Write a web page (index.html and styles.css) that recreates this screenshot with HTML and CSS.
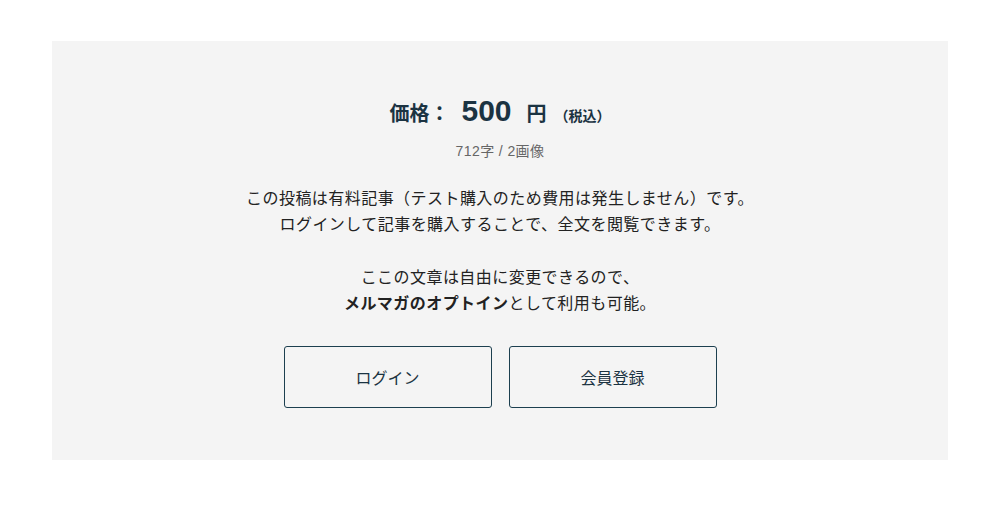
FILE: index.html
```html
<!DOCTYPE html>
<html lang="ja">
<head>
  <meta charset="UTF-8">
  <meta name="viewport" content="width=device-width, initial-scale=1.0">
  <title>有料記事</title>
  <link rel="stylesheet" href="styles.css">
</head>
<body>
  <div class="paywall">
    <div class="price">
      <span class="price-label">価格：</span>
      <span class="price-value">500</span>
      <span class="price-unit">円</span>
      <span class="price-tax">（税込）</span>
    </div>
    <p class="meta">712字 / 2画像</p>
    <div class="message">
      <p>この投稿は有料記事（テスト購入のため費用は発生しません）です。<br>ログインして記事を購入することで、全文を閲覧できます。</p>
      <p>ここの文章は自由に変更できるので、<br><strong>メルマガのオプトイン</strong>として利用も可能。</p>
    </div>
    <div class="actions">
      <a class="btn" href="#">ログイン</a>
      <a class="btn" href="#">会員登録</a>
    </div>
  </div>
</body>
</html>
```

FILE: styles.css
```css
body {
  margin: 0;
  padding: 41px 0;
  background: #fff;
  font-family: "Liberation Sans", "Noto Sans CJK JP", sans-serif;
  color: #222;
}
.paywall {
  width: 896px;
  margin: 0 auto;
  padding: 52px 0 52px;
  background: #f4f4f4;
  text-align: center;
}
.price {
  display: flex;
  justify-content: center;
  align-items: baseline;
  color: #1b3342;
  font-weight: bold;
  line-height: 36px;
}
.price-label {
  font-family: "Noto Sans CJK JP", sans-serif;
  font-size: 20px;
  margin-right: 12px;
}
.price-value {
  font-size: 30px;
  margin-right: 15px;
}
.price-unit {
  font-family: "Noto Sans CJK JP", sans-serif;
  font-size: 20px;
  margin-right: 8px;
}
.price-tax {
  font-family: "Noto Sans CJK JP", sans-serif;
  font-size: 14px;
}
.meta {
  margin: 8px 0 0;
  font-size: 14px;
  letter-spacing: 0.4px;
  line-height: 20px;
  color: #666;
}
.message {
  margin-top: 25px;
  font-size: 16px;
  letter-spacing: 0.45px;
  line-height: 26px;
}
.message p {
  margin: 0 0 27px;
}
.message p:last-child {
  margin-bottom: 0;
}
.message strong {
  font-weight: bold;
}
.actions {
  display: flex;
  justify-content: center;
  gap: 17px;
  margin-top: 29px;
}
.btn {
  display: flex;
  align-items: center;
  justify-content: center;
  width: 208px;
  height: 62px;
  box-sizing: border-box;
  border: 1px solid #1c3f4f;
  border-radius: 3px;
  color: #1b3342;
  font-size: 16px;
  text-decoration: none;
}
```
